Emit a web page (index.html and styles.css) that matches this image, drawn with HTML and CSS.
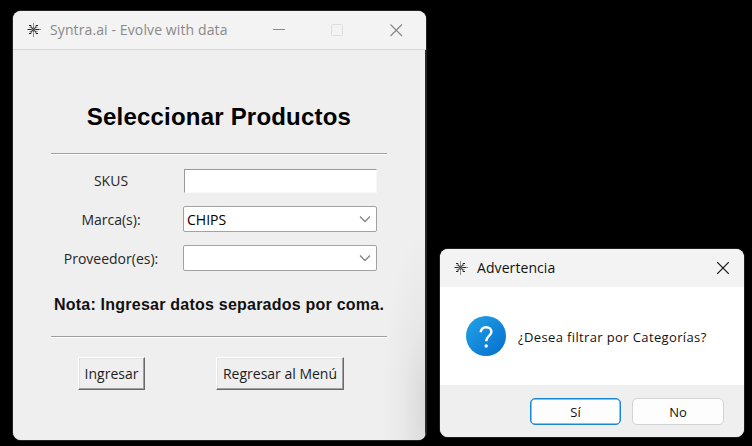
FILE: index.html
```html
<!DOCTYPE html>
<html lang="es">
<head>
<meta charset="utf-8">
<title>Syntra.ai - Evolve with data</title>
<link rel="stylesheet" href="styles.css">
</head>
<body>
<svg class="defs" width="0" height="0">
  <defs>
    <symbol id="logo" viewBox="0 0 14 14">
      <path d="M6.500 0v14M0 6.500h14" stroke-width=".8" opacity=".6"/>
      <path d="M3.500 3.500l6 6M9.500 3.500l-6 6" stroke-width=".7"/>
      <path d="M2 2.500h2M9 2.500h2M2 10.500h2M9 10.500h2M1 6.500h3M9 6.500h3" stroke-width="1.100"/>
      <path d="M4.500 2.500v2h-2M8.500 2.500v2h2M4.500 10.500v-2h-2M8.500 10.500v-2h2" stroke-width=".5"/>
      <circle cx="6.500" cy="6.500" r="1.800" stroke-width=".7"/>
    </symbol>
  </defs>
</svg>
<main class="desktop">
  <section class="window main-window">
    <header class="titlebar">
      <svg class="logo"><use href="#logo"/></svg>
      <h1 class="title">Syntra.ai - Evolve with data</h1>
      <svg class="controls" viewBox="0 0 130 14">
        <path d="M0 6.500h12" stroke="#8b8b8b"/>
        <rect x="58.500" y="1.500" width="11" height="11" rx="1" stroke="#dedede"/>
        <path d="M117.500 1.500l11.500 11.500M129 1.500l-11.500 11.500" stroke="#858585" stroke-width="1.100"/>
      </svg>
    </header>
    <div class="content">
      <h2 class="heading"><span>Seleccionar Productos</span></h2>
      <div class="rule"></div>
      <form class="form">
        <label class="label skus"><span>SKUS</span></label><div class="entry"></div>
        <label class="label"><span>Marca(s):</span></label>
        <div class="combo"><span>CHIPS</span><svg viewBox="0 0 12 8"><path d="M1 1.500l5 5 5-5"/></svg></div>
        <label class="label"><span>Proveedor(es):</span></label>
        <div class="combo"><span></span><svg viewBox="0 0 12 8"><path d="M1 1.500l5 5 5-5"/></svg></div>
      </form>
      <p class="note"><span>Nota: Ingresar datos separados por coma.</span></p>
      <div class="rule"></div>
      <div class="actions">
        <button class="raised enter"><span>Ingresar</span></button>
        <button class="raised back"><span>Regresar al Menú</span></button>
      </div>
    </div>
  </section>
  <section class="window dialog">
    <header class="titlebar">
      <svg class="logo"><use href="#logo"/></svg>
      <h1 class="title">Advertencia</h1>
      <svg class="close" viewBox="0 0 14 14"><path d="M1.200 1.200l11.600 11.600M12.800 1.200L1.200 12.800"/></svg>
    </header>
    <div class="message">
      <svg class="question" viewBox="0 0 40 40">
        <defs><linearGradient id="blue" x1="0" y1="0" x2="1" y2="1"><stop offset=".1" stop-color="#209ee4"/><stop offset=".9" stop-color="#0873d1"/></linearGradient></defs>
        <circle cx="20" cy="20" r="20" fill="url(#blue)"/>
        <path d="M14.800 16.300c0-3.200 2.200-5.100 5.200-5.100s5.400 1.900 5.400 4.600c0 4-5.200 4.300-5.200 9.400" fill="none" stroke="#fff" stroke-width="2.500"/>
        <circle cx="20.200" cy="30" r="1.700" fill="#fff"/>
      </svg>
      <p><span>¿Desea filtrar por Categorías?</span></p>
    </div>
    <footer class="choices">
      <button class="choice primary">Sí</button>
      <button class="choice">No</button>
    </footer>
  </section>
</main>
</body>
</html>
```
FILE: styles.css
```css
* { box-sizing: border-box; }
body { margin: 0; background: #000; font-family: "Open Sans", "Noto Sans", sans-serif; }
h1, h2, p { margin: 0; font-weight: 400; }
button { padding: 0; font-family: inherit; }
span, .title { white-space: nowrap; }
.defs { position: absolute; }
.desktop { position: relative; width: 752px; height: 446px; overflow: hidden; background: #000; }
.window { position: absolute; overflow: hidden; display: flex; flex-direction: column; background: #efefef; }
.main-window { left: 13px; top: 11px; width: 413px; height: 429px; border-radius: 8px; box-shadow: 0 0 0 1px #252525; }
.dialog { left: 440px; top: 249px; width: 304px; height: 188px; border-radius: 8px; box-shadow: 0 0 0 1px #202020; }
.titlebar { flex: none; display: flex; align-items: center; height: 39px; padding-left: 14px; background: #f3f3f3; }
.main-window .titlebar { border-bottom: 1px solid #d5d5d5; }
.logo { flex: none; width: 14px; height: 14px; fill: none; stroke: #222; }
.title { margin-left: 9px; font-size: 14px; line-height: 20px; color: #898989; }
.main-window .title { width: 223px; letter-spacing: .11px; }
.controls { flex: none; width: 130px; height: 14px; fill: none; }

.content { flex: 1; padding: 0 38px; border-right: 1px solid #2a2a2a; background: radial-gradient(ellipse 42px 180px at 100% 92%, #d9d9d9, #e8e8e8 50%, #efefef); }
.heading { height: 103px; padding-top: 50px; text-align: center; font: bold 24px/34px "Liberation Sans", Arial, sans-serif; letter-spacing: .2px; color: #000; }
.rule { height: 2px; border-top: 1px solid #a0a0a0; border-bottom: 1px solid #fff; }
.form { display: grid; grid-template-columns: 120px 194px; column-gap: 12px; grid-template-rows: 24px 27px 27px; row-gap: 12px; padding-top: 14px; }
.label { display: flex; align-items: center; justify-content: center; padding-top: 1px; font-size: 14px; color: #262626; }
.skus { padding: 0 0 1px; }
.entry { margin-left: 1px; background: #fff; border: 1px solid; border-color: #999 #f8f8f8 #f8f8f8 #999; }
.combo { display: flex; align-items: center; justify-content: space-between; margin-top: 1px; padding: 0 5px 0 3px; background: #fff; border: 1px solid #a2a2a2; border-radius: 2px; font-size: 14px; color: #000; }
.combo svg { width: 12px; height: 8px; fill: none; stroke: #858585; stroke-width: 1.300; }
.note { height: 65px; padding-top: 22px; display: flex; justify-content: center; text-align: center; font: bold 16px/24px "Liberation Sans", Arial, sans-serif; letter-spacing: .23px; color: #111; }
.actions { display: flex; gap: 71px; padding: 19px 0 0 27px; }
.raised { height: 33px; background: #efefef; border: 1px solid; border-color: #fff #696969 #696969 #fff; box-shadow: inset -1px -1px #a0a0a0, inset 1px 1px #e3e3e3; font-size: 14px; color: #1d1d1d; }
.enter { width: 67px; }
.back { width: 128px; }

.dialog .titlebar { height: 38px; }
.dialog .title { color: #111; flex: 1; letter-spacing: .08px; }
.close { width: 14px; height: 14px; margin-right: 14px; fill: none; stroke: #111; stroke-width: 1.200; }
.message { display: flex; align-items: center; height: 98px; padding-left: 26px; background: #fff; }
.question { flex: none; width: 40px; height: 40px; }
.message p { margin-left: 12px; padding-top: 1px; font-size: 13px; letter-spacing: .37px; color: #111; }
.choices { display: flex; justify-content: flex-end; gap: 11px; flex: 1; padding: 13px 20px 12px 0; background: #efefef; }
.choice { width: 92px; height: 27px; background: #fdfdfd; border: 1px solid #d3d3d3; border-radius: 5px; font-size: 13px; color: #111; }
.choice.primary { width: 91px; border-color: #1686d5; box-shadow: inset 0 0 0 .5px #1686d5; }
```
